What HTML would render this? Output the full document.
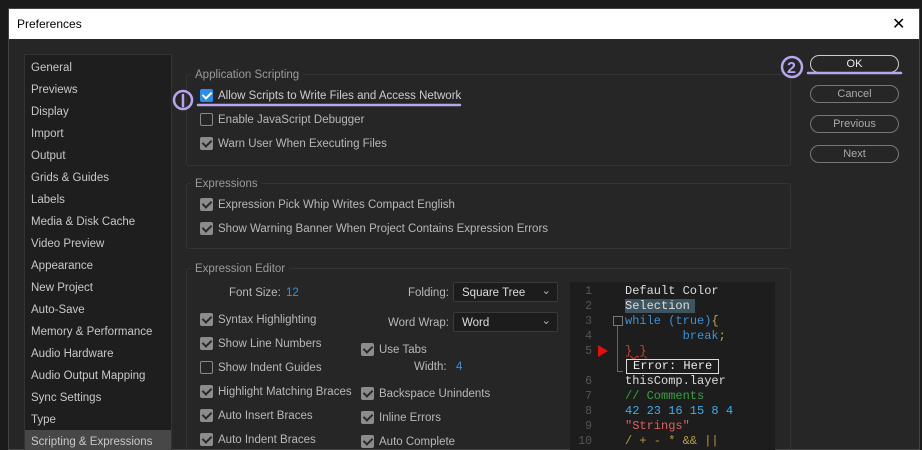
<!DOCTYPE html>
<html><head><style>
*{margin:0;padding:0;box-sizing:border-box}
html,body{width:922px;height:450px;overflow:hidden}
body{background:#1b1b1b;font-family:"Liberation Sans",sans-serif;font-size:11.5px;color:#b8b8b8;position:relative}
.a{position:absolute;white-space:nowrap;margin-top:2px}
.win{position:absolute;left:8px;top:8px;width:912px;height:442px;background:#262626;border:1px solid #444}
.title{position:absolute;left:9px;top:9px;width:910px;height:30px;background:#fff;color:#000;font-size:12px;padding:8px 0 0 8px}
.side{position:absolute;left:24px;top:54px;width:148px;height:400px;background:#1e1e1e;border:1px solid #333}
.si{position:absolute;left:6px;color:#c8c8c8;font-size:11.5px;margin-top:2px}
.grp{position:absolute;border:1px solid #343434;border-radius:3px}
.gl{position:absolute;background:#262626;padding:0 4px;color:#9a9a9a;margin-top:2px}
.cb{position:absolute;width:13px;height:13px;background:#8c8c8c;border-radius:2px}
.cb::after{content:"";position:absolute;left:4px;top:1px;width:4px;height:7px;border:solid #2a2a2a;border-width:0 2px 2px 0;transform:rotate(45deg)}
.cb.off{background:none;border:1.5px solid #888}.cb.off::after{display:none}
.cb.blue{background:#2d8ceb}.cb.blue::after{border-color:#fff}
.btn{position:absolute;left:810px;width:89px;height:18px;border:1px solid #777;border-radius:9px;text-align:center;color:#aaa;line-height:17px;font-size:11px}
.dd{position:absolute;width:105px;height:20px;background:#1c1c1c;border:1px solid #3a3a3a;border-radius:2px;color:#ddd;padding:4px 0 0 8px}
.dd::after{content:"⌄";position:absolute;right:6px;top:0px;color:#aaa}
.code{position:absolute;left:570px;top:282px;width:205px;height:168px;background:#1d1d1d;font-family:"Liberation Mono",monospace;font-size:12px}
.ln{position:absolute;width:22px;text-align:right;color:#555;font-family:"Liberation Mono",monospace;font-size:11.5px;margin-top:1px}
.cl{position:absolute;left:55px;white-space:pre;margin-top:1px}
</style></head><body>
<div class="win"></div>
<div class="title">Preferences</div>
<div class="a" style="left:892px;top:12px;color:#000;font-size:16px">✕</div>
<div class="side">
<div class="si" style="top:5px">General</div><div class="si" style="top:27px">Previews</div><div class="si" style="top:49px">Display</div><div class="si" style="top:71px">Import</div><div class="si" style="top:93px">Output</div><div class="si" style="top:115px">Grids &amp; Guides</div><div class="si" style="top:137px">Labels</div><div class="si" style="top:159px">Media &amp; Disk Cache</div><div class="si" style="top:181px">Video Preview</div><div class="si" style="top:203px">Appearance</div><div class="si" style="top:225px">New Project</div><div class="si" style="top:247px">Auto-Save</div><div class="si" style="top:269px">Memory &amp; Performance</div><div class="si" style="top:291px">Audio Hardware</div><div class="si" style="top:313px">Audio Output Mapping</div><div class="si" style="top:335px">Sync Settings</div><div class="si" style="top:357px">Type</div>
<div style="position:absolute;left:0;top:375px;width:146px;height:24px;background:#474747"></div>
<div class="si" style="top:379px">Scripting &amp; Expressions</div>
</div>
<div class="grp" style="left:186px;top:74px;width:605px;height:92px"></div>
<div class="gl" style="left:191px;top:67px">Application Scripting</div>
<div class="cb blue" style="left:200px;top:89px"></div><div class="a" style="left:218px;top:88px;color:#ccc">Allow Scripts to Write Files and Access Network</div>
<div class="cb off" style="left:200px;top:113px"></div><div class="a" style="left:218px;top:112px">Enable JavaScript Debugger</div>
<div class="cb" style="left:200px;top:137px"></div><div class="a" style="left:218px;top:136px">Warn User When Executing Files</div>
<div class="grp" style="left:186px;top:183px;width:605px;height:66px"></div>
<div class="gl" style="left:191px;top:176px">Expressions</div>
<div class="cb" style="left:200px;top:198px"></div><div class="a" style="left:218px;top:197px">Expression Pick Whip Writes Compact English</div>
<div class="cb" style="left:200px;top:222px"></div><div class="a" style="left:218px;top:221px">Show Warning Banner When Project Contains Expression Errors</div>
<div class="grp" style="left:186px;top:268px;width:605px;height:190px"></div>
<div class="gl" style="left:191px;top:261px">Expression Editor</div>
<div class="a" style="left:229px;top:285px">Font Size:</div><div class="a" style="left:286px;top:285px;color:#3d8fd6">12</div>
<div class="a" style="left:408px;top:285px">Folding:</div><div class="dd" style="left:453px;top:282px">Square Tree</div>
<div class="a" style="left:388px;top:315px">Word Wrap:</div><div class="dd" style="left:453px;top:312px">Word</div>
<div class="cb" style="left:200px;top:313px"></div><div class="a" style="left:218px;top:312px">Syntax Highlighting</div>
<div class="cb" style="left:200px;top:337px"></div><div class="a" style="left:218px;top:336px">Show Line Numbers</div>
<div class="cb off" style="left:200px;top:361px"></div><div class="a" style="left:218px;top:360px">Show Indent Guides</div>
<div class="cb" style="left:200px;top:385px"></div><div class="a" style="left:218px;top:384px">Highlight Matching Braces</div>
<div class="cb" style="left:200px;top:409px"></div><div class="a" style="left:218px;top:408px">Auto Insert Braces</div>
<div class="cb" style="left:200px;top:433px"></div><div class="a" style="left:218px;top:432px">Auto Indent Braces</div>
<div class="cb" style="left:361px;top:343px"></div><div class="a" style="left:379px;top:342px">Use Tabs</div>
<div class="a" style="left:414px;top:359px">Width:</div><div class="a" style="left:456px;top:359px;color:#3d8fd6">4</div>
<div class="cb" style="left:361px;top:387px"></div><div class="a" style="left:379px;top:386px">Backspace Unindents</div>
<div class="cb" style="left:361px;top:411px"></div><div class="a" style="left:379px;top:410px">Inline Errors</div>
<div class="cb" style="left:361px;top:435px"></div><div class="a" style="left:379px;top:434px">Auto Complete</div>
<div class="code">
<div class="ln" style="left:0;top:2px">1</div><div class="ln" style="left:0;top:17px">2</div><div class="ln" style="left:0;top:32px">3</div><div class="ln" style="left:0;top:47px">4</div><div class="ln" style="left:0;top:62px">5</div><div class="ln" style="left:0;top:92px">6</div><div class="ln" style="left:0;top:107px">7</div><div class="ln" style="left:0;top:122px">8</div><div class="ln" style="left:0;top:137px">9</div><div class="ln" style="left:-4px;top:152px;width:26px">10</div>
<div class="cl" style="top:1px;color:#ddd">Default Color</div>
<div class="cl" style="top:16px;color:#ddd;background:#3e5560;width:70px">Selection</div>
<div style="position:absolute;left:43px;top:34px;width:10px;height:10px;border:1px solid #777"></div>
<div style="position:absolute;left:47px;top:44px;width:1px;height:45px;background:#666"></div>
<div style="position:absolute;left:47px;top:89px;width:6px;height:1px;background:#666"></div>
<div class="cl" style="top:31px;color:#3d8fd6">while <span style="color:#3d8fd6">(true)</span><span style="color:#c8a640">{</span></div>
<div class="cl" style="top:46px;color:#3d8fd6">        break<span style="color:#c8a640">;</span></div>
<div style="position:absolute;left:28px;top:63px;width:0;height:0;border-left:10px solid #e01010;border-top:6px solid transparent;border-bottom:6px solid transparent"></div>
<div class="cl" style="top:61px;color:#c8482e;text-decoration:underline wavy #c03030">} }</div>
<div class="cl" style="top:76px;left:56px;border:1px solid #ddd;color:#eee;padding:0 6px;line-height:13px">Error: Here</div>
<div class="cl" style="top:91px;color:#ddd">thisComp.layer</div>
<div class="cl" style="top:106px;color:#3aa040">// Comments</div>
<div class="cl" style="top:121px;color:#3daee9">42 23 16 15 8 4</div>
<div class="cl" style="top:136px;color:#e06060">"Strings"</div>
<div class="cl" style="top:151px;color:#b89a40">/ + - * &amp;&amp; ||</div>
</div>
<div class="btn" style="top:55px;border-color:#ccc;color:#eee">OK</div>
<div class="btn" style="top:85px">Cancel</div>
<div class="btn" style="top:115px">Previous</div>
<div class="btn" style="top:145px">Next</div>
<svg style="position:absolute;left:0;top:0" width="922" height="450">
<g fill="none" stroke="#b7a6ee" stroke-width="2.5" stroke-linecap="round">
<circle cx="183" cy="100" r="9"/><line x1="183" y1="95" x2="183" y2="106"/>
<line x1="198" y1="105" x2="460" y2="105"/>
<circle cx="792" cy="67" r="10"/>
<line x1="808" y1="73" x2="901" y2="73"/>
</g>
<text x="787" y="73" fill="#b7a6ee" font-family="Liberation Sans" font-weight="bold" font-size="16">2</text>
</svg>
</body></html>
